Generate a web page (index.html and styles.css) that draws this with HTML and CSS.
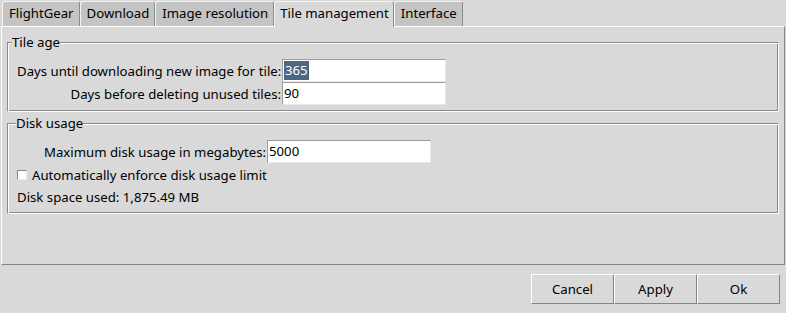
FILE: index.html
```html
<!DOCTYPE html>
<html>
<head>
<meta charset="utf-8">
<link rel="stylesheet" href="styles.css">
</head>
<body>
<div class="window">
  <div class="tabs">
    <div class="tab">FlightGear</div>
    <div class="tab">Download</div>
    <div class="tab">Image resolution</div>
    <div class="tab tab-active">Tile management</div>
    <div class="tab">Interface</div>
  </div>
  <div class="panel">
    <fieldset class="frame frame-age">
      <legend class="legend legend-age">Tile age</legend>
      <div class="form form-age">
        <label class="label">Days until downloading new image for tile:</label>
        <div class="field"><span class="sel">365</span></div>
        <label class="label">Days before deleting unused tiles:</label>
        <div class="field">90</div>
      </div>
    </fieldset>
    <fieldset class="frame frame-disk">
      <legend class="legend legend-disk">Disk usage</legend>
      <div class="form form-disk">
        <label class="label">Maximum disk usage in megabytes:</label>
        <div class="field">5000</div>
      </div>
      <div class="check-row">
        <span class="checkbox"></span>
        <span class="check-text">Automatically enforce disk usage limit</span>
      </div>
      <div class="info-row">Disk space used: 1,875.49 MB</div>
    </fieldset>
  </div>
  <div class="buttons">
    <div class="button">Cancel</div>
    <div class="button">Apply</div>
    <div class="button">Ok</div>
  </div>
</div>
</body>
</html>
```
FILE: styles.css
```css
* { box-sizing: border-box; }
html, body {
  margin: 0;
  padding: 0;
  background: #d9d9d9;
}
body {
  font-family: "Noto Sans", "DejaVu Sans", sans-serif;
  font-size: 13.2px;
  color: #000;
  width: 786px;
  height: 313px;
  overflow: hidden;
}
.window {
  display: flex;
  flex-direction: column;
}
.tabs {
  display: flex;
  align-items: flex-end;
  height: 26px;
  padding-left: 2px;
}
.tab {
  height: 25px;
  line-height: 23px;
  padding: 0 5px 0 6px;
  background: #c4c4c4;
  border-top: 1px solid #f4f4f4;
  border-left: 1px solid #f4f4f4;
  border-right: 1px solid #8a8a8a;
  border-radius: 3px 3px 0 0;
  white-space: nowrap;
}
.tab-active {
  background: #d9d9d9;
  position: relative;
  z-index: 1;
  height: 26px;
  margin-bottom: -1px;
  padding: 0 4px 0 5px;
}
.panel {
  margin: 0 1px;
  height: 239px;
  border: 1px solid;
  border-color: #ffffff #858585 #858585 #ffffff;
  padding: 7px 5px 0 5px;
  display: flex;
  flex-direction: column;
  gap: 3px;
}
.frame {
  margin: 0;
  min-width: 0;
  border: 1px solid;
  border-color: #8a8a8a #ffffff #ffffff #8a8a8a;
  box-shadow: inset 1px 1px 0 #ffffff, inset -1px -1px 0 #8a8a8a;
  padding: 9px 4px 6px 9px;
}
.frame-disk {
  padding-bottom: 5px;
}
.legend {
  line-height: 16px;
  padding: 0;
  background: #d9d9d9;
}
.legend-age { margin-left: -5px; }
.legend-disk { margin-left: -1px; }
.form {
  display: grid;
  grid-auto-rows: 23px;
  align-items: center;
}
.form-age { grid-template-columns: 265px 164px; }
.form-disk { grid-template-columns: 250px 164px; }
.label {
  text-align: right;
  padding-right: 1px;
  white-space: nowrap;
}
.field {
  height: 23px;
  background: #ffffff;
  border: 1px solid;
  border-color: #9c9c9c #e8e8e8 #e8e8e8 #9c9c9c;
  padding: 1px 1px 0 1px;
  line-height: 19px;
  white-space: nowrap;
}
.sel {
  display: inline-block;
  background: #4a6886;
  color: #ffffff;
  padding: 0 1px;
  line-height: 19px;
}
.check-row {
  height: 24px;
  display: flex;
  align-items: center;
  gap: 5px;
}
.checkbox {
  width: 10px;
  height: 10px;
  background: #ffffff;
  border: 1px solid;
  border-color: #8a8a8a #ececec #ececec #8a8a8a;
}
.info-row {
  height: 21px;
  line-height: 21px;
}
.buttons {
  display: flex;
  justify-content: flex-end;
  padding: 9px 6px 0 0;
}
.button {
  width: 83px;
  height: 30px;
  line-height: 28px;
  text-align: center;
  border: 1px solid;
  border-color: #ffffff #858585 #858585 #ffffff;
}
```
